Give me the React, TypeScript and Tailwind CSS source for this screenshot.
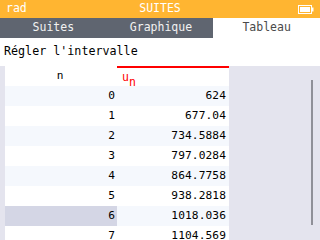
import React from 'react';

const rows: [string, string][] = [
  ['0', '624'],
  ['1', '677.04'],
  ['2', '734.5884'],
  ['3', '797.0284'],
  ['4', '864.7758'],
  ['5', '938.2818'],
  ['6', '1018.036'],
  ['7', '1104.569'],
];

const mono = { fontFamily: '"DejaVu Sans Mono", "Liberation Mono", monospace' };

function Battery() {
  return (
    <svg width="16" height="9" viewBox="0 0 16 9" className="block">
      <rect x="0.5" y="0.5" width="13" height="8" fill="none" stroke="white" />
      <rect x="2" y="2" width="10" height="5" fill="white" />
      <rect x="14" y="2.5" width="1.5" height="4" fill="white" />
    </svg>
  );
}

export default function App() {
  return (
    <div className="w-[320px] h-[240px] overflow-hidden bg-white flex flex-col" style={mono}>
      {/* barre de titre */}
      <div className="relative shrink-0 h-[18px] bg-[#ffb531] flex items-center justify-between px-[6px] text-white text-[11.5px] leading-none">
        <span>rad</span>
        <span className="absolute left-0 right-0 text-center">SUITES</span>
        <Battery />
      </div>

      {/* onglets */}
      <div className="shrink-0 h-[20px] grid grid-cols-3 bg-[#5f6570] text-[11.5px] leading-none">
        <div className="flex items-center justify-center text-[#f2f2f2]">Suites</div>
        <div className="flex items-center justify-center text-[#f2f2f2] pl-[2px]">Graphique</div>
        <div className="flex items-center justify-center bg-white text-[#4a4a4a]">Tableau</div>
      </div>

      <div className="shrink-0 h-[28px] flex items-center px-[4px] text-[11.7px] text-black">
        Régler l'intervalle
      </div>

      {/* tableau */}
      <div className="flex-1 min-h-0 flex bg-[#e4e4ee] relative">
        <div className="w-[5px] shrink-0" />
        <div className="w-[224px] shrink-0 flex flex-col text-[11.2px] text-black">
          <div className="h-[20px] shrink-0 flex">
            <div className="w-[112px] bg-white flex items-center justify-center pr-[2px]">n</div>
            <div className="w-[112px] bg-white border-t-2 border-[#ff0000] flex items-start pl-[5px] pt-[1px] text-[#ff0000]">
              <span className="text-[11.5px]">u</span>
              <span className="text-[11.5px] mt-[5px]">n</span>
            </div>
          </div>
          {rows.map(([n, u], i) => {
            const stripe = i % 2 === 0 ? 'bg-[#f5f8fd]' : 'bg-white';
            return (
              <div key={n} className="h-[20px] shrink-0 flex">
                <div
                  className={
                    'w-[112px] flex items-center justify-end pr-[2px] ' +
                    (i === 6 ? 'bg-[#d4d6e5]' : stripe)
                  }
                >
                  {n}
                </div>
                <div className={'w-[112px] flex items-center justify-end pr-[3px] tracking-[0.1px] ' + stripe}>
                  {u}
                </div>
              </div>
            );
          })}
        </div>
        <div className="flex-1" />
        <div className="absolute left-[311px] top-[14px] w-[2px] h-[145px] bg-[#8f9098]" />
      </div>
    </div>
  );
}
